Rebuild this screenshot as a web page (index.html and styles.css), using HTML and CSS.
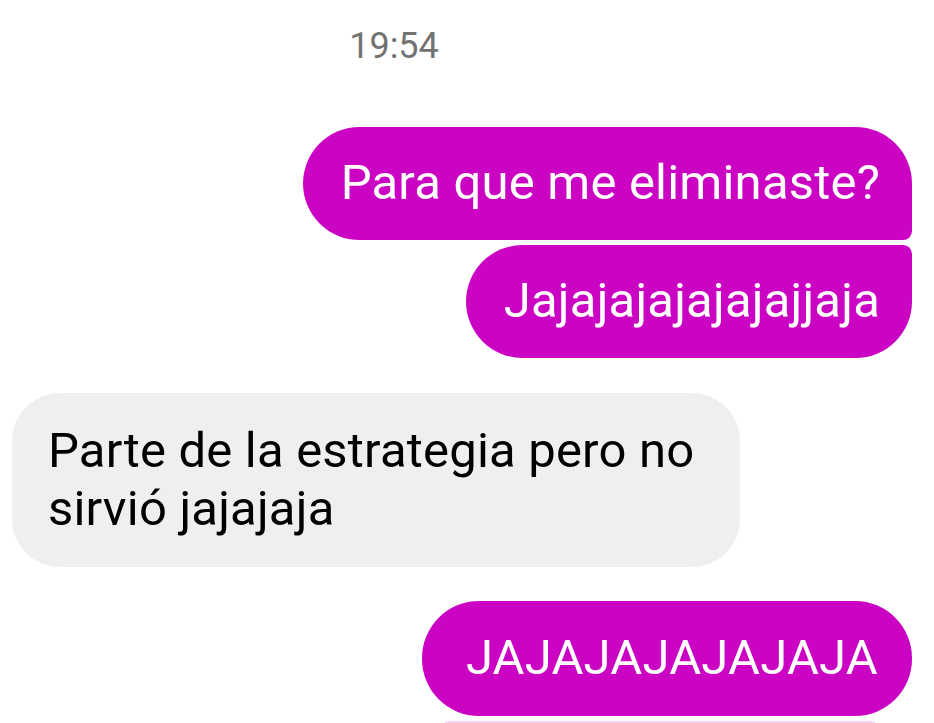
FILE: index.html
```html
<!DOCTYPE html>
<html lang="es">
<head>
  <meta charset="UTF-8">
  <meta name="viewport" content="width=device-width, initial-scale=1.0">
  <title>Chat</title>
  <link rel="stylesheet" href="styles.css">
</head>
<body>
  <div class="chat">
    <div class="time">19:54</div>

    <!-- mensajes enviados -->
    <div class="group out">
      <div class="msg first">Para que me eliminaste?</div>
      <div class="msg last">Jajajajajajajajjaja</div>
    </div>

    <!-- mensaje recibido -->
    <div class="group in">
      <div class="msg">Parte de la estrategia pero no sirvió jajajaja</div>
    </div>

    <div class="group out">
      <div class="msg single">JAJAJAJAJAJAJA</div>
      <div class="reaction-bar"></div>
    </div>
  </div>
</body>
</html>
```

FILE: styles.css
```css
body {
  margin: 0;
  background-color: #ffffff;
  font-family: Roboto, "Noto Sans", Arial, sans-serif;
  overflow: hidden;
}

.chat {
  display: flex;
  flex-direction: column;
  padding: 0 22px 0 12px;
}

.time {
  text-align: center;
  color: #727272;
  font-size: 36px;
  line-height: 40px;
  margin: 26px 136px 0 0;
}

.group {
  display: flex;
  flex-direction: column;
  gap: 5px;
}

.group.out {
  align-items: flex-end;
  margin-top: 61px;
}

.group.in {
  align-items: flex-start;
  margin-top: 35px;
}

.group.in + .group.out {
  margin-top: 34px;
}

.msg {
  box-sizing: border-box;
  font-size: 49px;
  line-height: 58px;
  letter-spacing: 0.2px;
  padding: 27px 32px 28px 38px;
  border-radius: 57px;
}

.out .msg {
  background-color: #cb04c3;
  color: #ffffff;
}

.out .msg.first {
  border-bottom-right-radius: 9px;
}

.out .msg.last {
  border-top-right-radius: 9px;
}

.out .msg.single {
  padding: 28px 34px 29px 44px;
}

/* franja clara del siguiente elemento */
.reaction-bar {
  width: 434px;
  height: 40px;
  margin-right: 35px;
  background-color: #f9d3f6;
  border-radius: 6px;
}

.in .msg {
  background-color: #efefef;
  color: #000000;
  max-width: 728px;
  padding: 29px 34px 29px 36px;
  border-radius: 48px;
}
```
